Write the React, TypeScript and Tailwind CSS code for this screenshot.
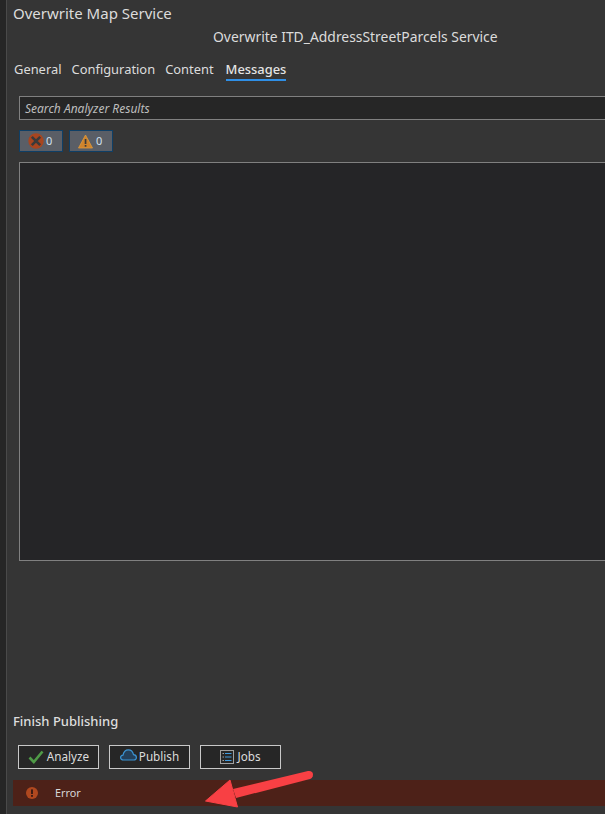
const font = { fontFamily: '"Noto Sans", "Open Sans", sans-serif' };

function ErrorIcon() {
  return (
    <svg width="16" height="16" viewBox="0 0 16 16" className="shrink-0">
      <circle cx="8" cy="8" r="7.7" fill="#a8451f" />
      <path d="M3.8 3.8 L12.2 12.2 M12.2 3.8 L3.8 12.2" stroke="#3a3a3a" strokeWidth="2.6" />
    </svg>
  );
}

function WarnIcon() {
  return (
    <svg width="15" height="15" viewBox="0 0 15 15" className="shrink-0">
      <path d="M7.5 1 L14.5 14 L0.5 14 Z" fill="#d0842c" stroke="#e09a3c" strokeWidth="0.8" />
      <rect x="6.7" y="5" width="1.7" height="5" fill="#3a3a3a" />
      <rect x="6.7" y="11" width="1.7" height="1.7" fill="#3a3a3a" />
    </svg>
  );
}

function Check() {
  return (
    <svg width="16" height="14" viewBox="0 0 16 14" className="shrink-0">
      <path d="M1.5 7.5 L5.8 12 L14.5 1.5" fill="none" stroke="#4f9a47" strokeWidth="2.6" />
    </svg>
  );
}

function Cloud() {
  return (
    <svg width="17" height="12" viewBox="0 0 17 12" className="shrink-0 -mt-[5px]">
      <path
        d="M3.4 11 C1.6 11 0.6 9.8 0.6 8.6 C0.6 7.2 1.7 6.2 3 6.1 C3.6 3 5.8 0.9 8.4 0.9 C10.9 0.9 12.9 2.8 13.5 5.6 C15.2 5.8 16.4 7 16.4 8.5 C16.4 9.9 15.2 11 13.7 11 Z"
        fill="#24405a"
        stroke="#3b94d4"
        strokeWidth="1.2"
      />
    </svg>
  );
}

function JobsIcon() {
  return (
    <svg width="14" height="14" viewBox="0 0 14 14" className="shrink-0">
      <rect x="0.5" y="0.5" width="13" height="13" fill="none" stroke="#a0a0a0" />
      <path d="M2.5 3.5 H4 M2.5 7 H4 M2.5 10.5 H4" stroke="#a0a0a0" />
      <path d="M5 3.5 H11.5 M5 7 H11.5 M5 10.5 H11.5" stroke="#3f9be0" />
    </svg>
  );
}

export default function App() {
  return (
    <div className="relative flex h-[814px] w-[605px] overflow-hidden bg-[#353535] text-[#dcdcdc]" style={font}>
      <div className="w-[7px] shrink-0 border-r border-[#4a4a4a] bg-[#262626]" />
      <div className="flex min-w-0 flex-1 flex-col">
        <div className="ml-[6px] mt-[3px] h-[21px] text-[15px] leading-[21px]">Overwrite Map Service</div>
        <div className="ml-[206px] mt-[3px] h-[20px] whitespace-nowrap text-[13.9px] leading-[20px]">
          Overwrite ITD_AddressStreetParcels Service
        </div>
        <div className="ml-[7px] mt-[13px] flex h-[21px] gap-[10px] text-[12.9px] leading-[19px]">
          <span>General</span>
          <span>Configuration</span>
          <span>Content</span>
          <span className="ml-[2px] h-[21px] border-b-2 border-[#2f8fe6] font-medium text-[#e4e4e4]">Messages</span>
        </div>
        <div className="ml-[12px] mt-[15px] h-[24px] w-[600px] border border-[#808080] bg-[#262626] pl-[5px] text-[12px] italic leading-[23px] text-[#bdbdbd]">
          Search Analyzer Results
        </div>
        <div className="ml-[12px] mt-[10px] flex gap-[6px]">
          <div className="flex h-[22px] w-[44px] items-center gap-[2px] border border-[#0f3f66] bg-[#5a5e66] pl-[8px] text-[11px] text-[#cfe0f0]">
            <ErrorIcon />
            <span>0</span>
          </div>
          <div className="flex h-[22px] w-[44px] items-center gap-[3px] border border-[#0f3f66] bg-[#5a5e66] pl-[8px] text-[11px] text-[#cfe0f0]">
            <WarnIcon />
            <span>0</span>
          </div>
        </div>
        <div className="ml-[12px] mt-[10px] h-[399px] w-[600px] border border-[#808080] bg-[#252527]" />
        <div className="ml-[6px] mt-[150px] h-[20px] text-[13px] font-medium leading-[20px] text-[#dedede]">Finish Publishing</div>
        <div className="ml-[11px] mt-[14px] flex gap-[10px] text-[11.7px]">
          <div className="flex h-[24px] w-[81px] items-center justify-center gap-[3px] border border-[#c8c8c8] bg-[#262626]">
            <Check />
            <span>Analyze</span>
          </div>
          <div className="flex h-[24px] w-[81px] items-center justify-center gap-[2px] border border-[#c8c8c8] bg-[#262626]">
            <Cloud />
            <span>Publish</span>
          </div>
          <div className="flex h-[24px] w-[81px] items-center justify-center gap-[3px] border border-[#c8c8c8] bg-[#262626]">
            <JobsIcon />
            <span>Jobs</span>
          </div>
        </div>
        <div className="ml-[6px] mt-[11px] flex h-[26px] items-center bg-[#4d2118] pl-[13px] text-[10.8px] text-[#d8d8d8]">
          <svg width="12" height="12" viewBox="0 0 12 12" className="shrink-0">
            <circle cx="6" cy="6" r="6" fill="#b0481f" />
            <rect x="5" y="2.4" width="2" height="4.6" fill="#3f1c14" />
            <rect x="5" y="8" width="2" height="1.8" fill="#3f1c14" />
          </svg>
          <span className="ml-[17px]">Error</span>
        </div>
      </div>
      <svg width="120" height="50" viewBox="0 0 120 50" className="absolute left-[200px] top-[765px]">
        <path d="M33 24 L108 6 C111 5.500 113 7 113 9.500 C113 12 111.500 13.500 110 14 L36 33 Z" fill="#f84044" />
        <path d="M5.500 36 L30 15 L37.500 42 Z" fill="#f84044" stroke="#f84044" strokeWidth="1" strokeLinejoin="round" />
      </svg>
    </div>
  );
}
